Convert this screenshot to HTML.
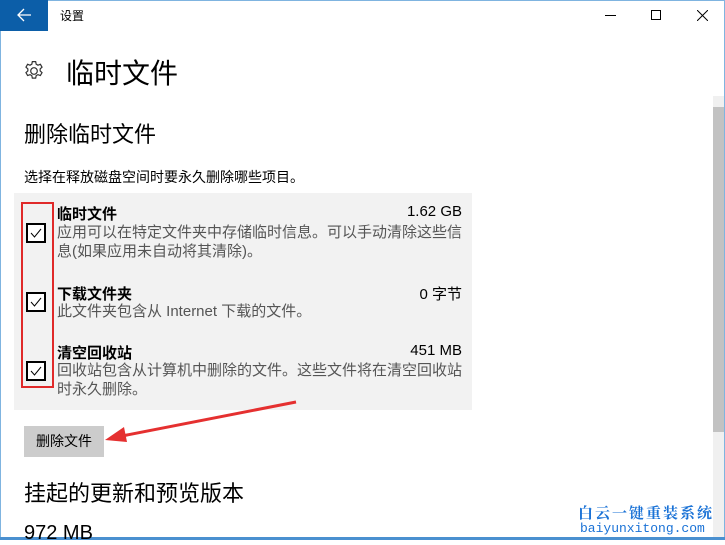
<!DOCTYPE html>
<html><head><meta charset="utf-8"><style>
*{margin:0;padding:0;box-sizing:border-box}
body{width:725px;height:540px;overflow:hidden;background:#fff;position:relative;font-family:"Liberation Sans","Noto Sans CJK SC",sans-serif;color:#000}
.a{position:absolute;white-space:nowrap}
.cb{position:absolute;left:26px;width:20px;height:20px;border:2px solid #000;background:#fff}
.cb svg{position:absolute;left:2px;top:2px}
.t{font-size:15px;font-weight:bold;left:57px}
.s{font-size:15px;right:263px;text-align:right}
.d{font-size:15px;color:#555;left:57px;line-height:19px}
</style></head><body>
<div class="a" style="left:0;top:0;width:1px;height:540px;background:#7fb4e0"></div>
<div class="a" style="left:724px;top:0;width:1px;height:540px;background:#7fb4e0"></div>
<div class="a" style="left:0;top:537px;width:725px;height:3px;background:#4a90d0"></div>
<div class="a" style="left:0;top:0;width:725px;height:1px;background:#7fb4e0"></div>
<div class="a" style="left:0;top:0;width:48px;height:31px;background:#0c5ea8"></div>
<svg class="a" style="left:17px;top:8px" width="16" height="14" viewBox="0 0 16 14"><path d="M1 7H14M7 1L1 7L7 13" stroke="#fff" stroke-width="1.3" fill="none"/></svg>
<div class="a" style="left:60px;top:7px;font-size:12px">设置</div>
<div class="a" style="left:605px;top:15px;width:11px;height:1px;background:#000"></div>
<div class="a" style="left:651px;top:10px;width:10px;height:10px;border:1px solid #000"></div>
<svg class="a" style="left:697px;top:10px" width="11" height="11"><path d="M0 0L11 11M11 0L0 11" stroke="#000" stroke-width="1"/></svg>
<svg class="a" style="left:23px;top:60px" width="22" height="22" viewBox="0 0 20 20"><g fill="none" stroke="#333" stroke-width="1.1"><circle cx="10" cy="10" r="3"/><path d="M8.5 1.5h3l.5 2.3 1.6.9 2.2-.8 1.5 2.6-1.7 1.6v1.8l1.7 1.6-1.5 2.6-2.2-.8-1.6.9-.5 2.3h-3l-.5-2.3-1.6-.9-2.2.8-1.5-2.6 1.7-1.6V8.1L2.7 6.5l1.5-2.6 2.2.8 1.6-.9z"/></g></svg>
<div class="a" style="left:66px;top:52px;font-size:28px">临时文件</div>
<div class="a" style="left:24px;top:117px;font-size:22px">删除临时文件</div>
<div class="a" style="left:24px;top:167px;font-size:14px">选择在释放磁盘空间时要永久删除哪些项目。</div>
<div class="a" style="left:14px;top:193px;width:458px;height:217px;background:#f2f2f2"></div>
<div class="a t" style="top:203px">临时文件</div><div class="a s" style="top:203px">1.62 GB</div>
<div class="a d" style="top:223px">应用可以在特定文件夹中存储临时信息。可以手动清除这些信<br>息(如果应用未自动将其清除)。</div>
<div class="a t" style="top:283px">下载文件夹</div><div class="a s" style="top:283px">0 字节</div>
<div class="a d" style="top:302px">此文件夹包含从 Internet 下载的文件。</div>
<div class="a t" style="top:342px">清空回收站</div><div class="a s" style="top:342px">451 MB</div>
<div class="a d" style="top:361px">回收站包含从计算机中删除的文件。这些文件将在清空回收站<br>时永久删除。</div>
<div class="cb" style="top:223px"><svg width="12" height="12"><path d="M1 6L4.5 10L11 2" stroke="#000" fill="none"/></svg></div>
<div class="cb" style="top:292px"><svg width="12" height="12"><path d="M1 6L4.5 10L11 2" stroke="#000" fill="none"/></svg></div>
<div class="cb" style="top:361px"><svg width="12" height="12"><path d="M1 6L4.5 10L11 2" stroke="#000" fill="none"/></svg></div>
<div class="a" style="left:21px;top:202px;width:33px;height:186px;border:2px solid #e02a2a"></div>
<div class="a" style="left:24px;top:426px;width:80px;height:31px;background:#ccc;font-size:14px;line-height:31px;text-align:center">删除文件</div>
<svg class="a" style="left:100px;top:398px" width="200" height="50"><path d="M196 4L22 38" stroke="#e53030" stroke-width="3"/><path d="M5 42L24 29L27 44Z" fill="#e53030"/></svg>
<div class="a" style="left:24px;top:476px;font-size:22px">挂起的更新和预览版本</div>
<div class="a" style="left:24px;top:522px;font-size:20px">972 MB</div>
<div class="a" style="left:713px;top:96px;width:11px;height:441px;background:#f0f0f0"></div>
<div class="a" style="left:713px;top:107px;width:11px;height:325px;background:#c2c2c2"></div>
<div class="a" style="left:578px;top:502px;font-size:15px;font-weight:bold;color:#1a72d6;letter-spacing:2px;font-family:'Liberation Serif','Noto Serif CJK SC',serif">白云一键重装系统</div>
<div class="a" style="left:580px;top:521px;font-size:13px;color:#1a72d6;font-family:'Liberation Mono',monospace">baiyunxitong.com</div>
</body></html>
